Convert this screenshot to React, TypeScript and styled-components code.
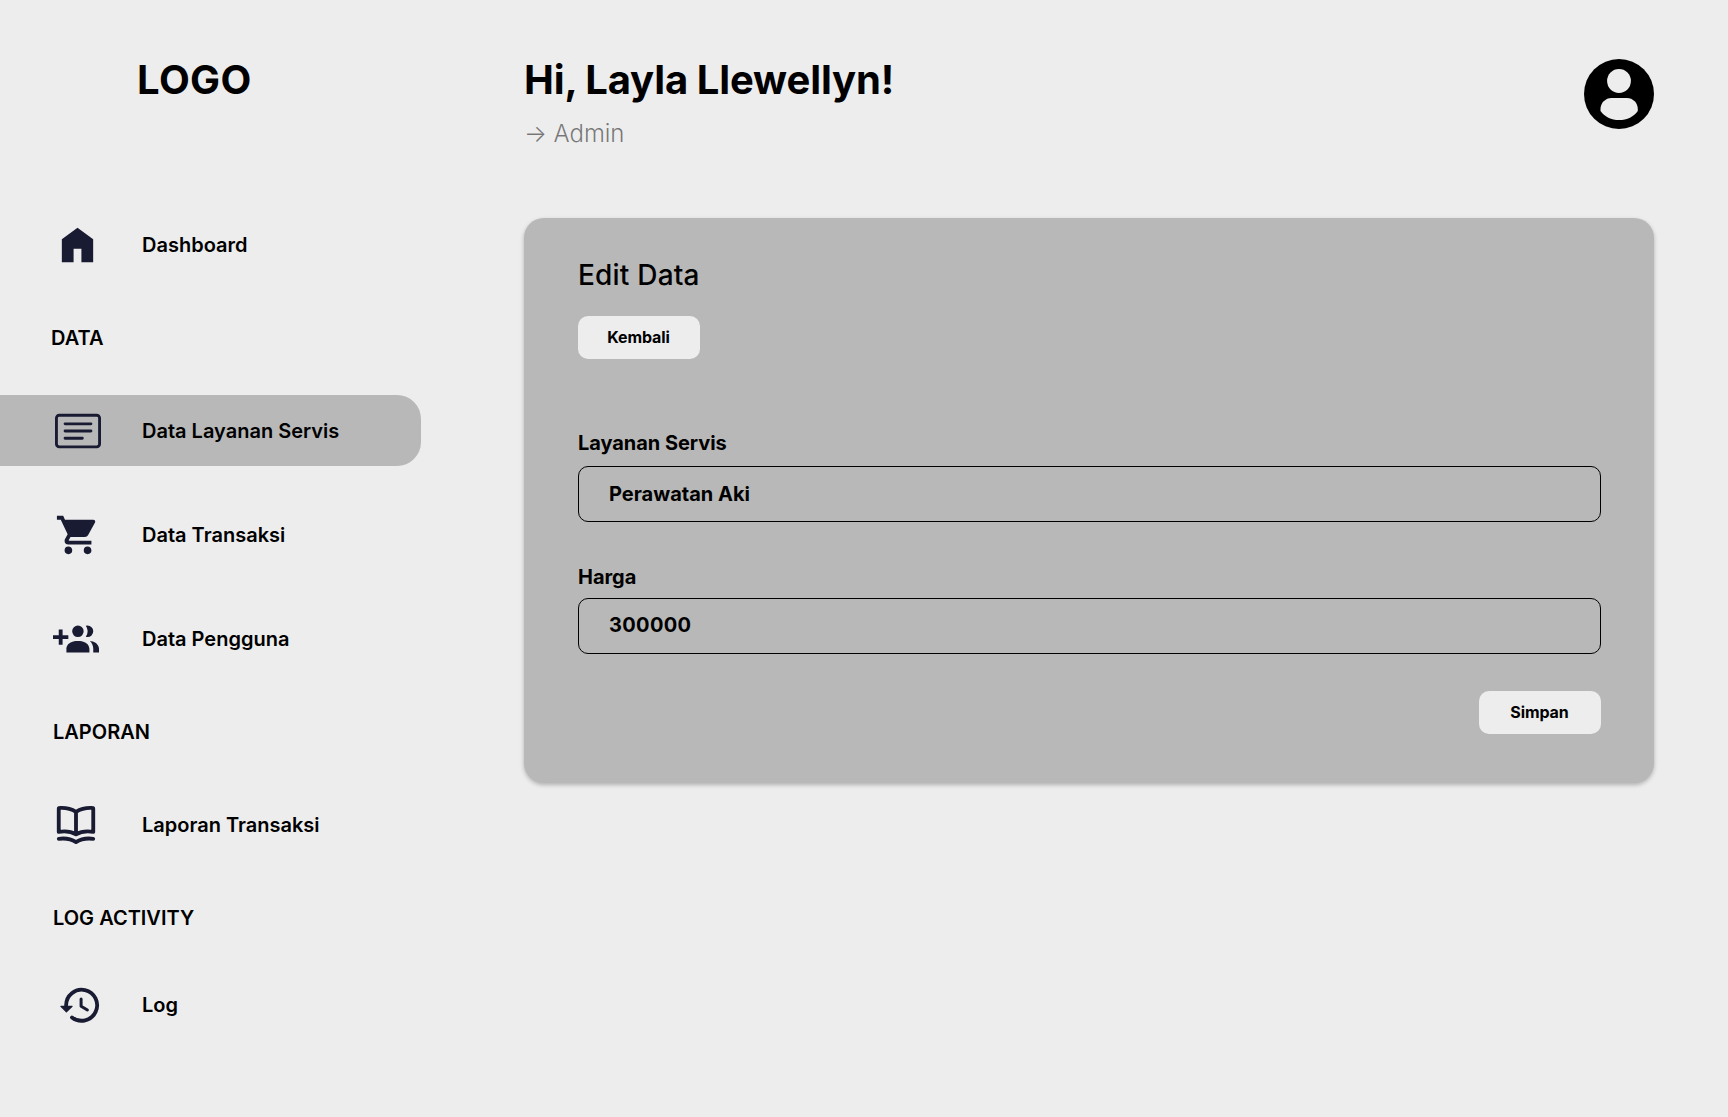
import React from "react";
import styled, { createGlobalStyle } from "styled-components";
import { BsCardText } from "react-icons/bs";

const GlobalStyle = createGlobalStyle`
  *, *::before, *::after { box-sizing: border-box; }
  body {
    margin: 0;
    background: #ededed;
    color: #000;
    font-family: Inter, "Liberation Sans", sans-serif;
  }
  h1, h2, p { margin: 0; }
`;

const Page = styled.div`
  display: flex;
  width: 1728px;
  height: 1117px;
  overflow: hidden;
  background: #ededed;
`;

const Sidebar = styled.aside`
  display: flex;
  flex-direction: column;
  flex: none;
  width: 524px;
`;

const Logo = styled.div`
  height: 48px;
  margin: 56px 0 105px 137px;
  font-size: 40px;
  line-height: 48px;
  font-weight: 700;
  letter-spacing: 0.4px;
`;

const Nav = styled.nav`
  display: flex;
  flex-direction: column;
  width: 421px;
`;

const Section = styled.div<{ $indent: number; $below: number }>`
  margin: 46px 0 ${(p) => p.$below}px;
  padding-left: ${(p) => p.$indent}px;
  font-size: 20px;
  line-height: 24px;
  font-weight: 600;
`;

const Group = styled.div`
  display: flex;
  flex-direction: column;
  gap: 33px;
`;

const Item = styled.a<{ $active?: boolean }>`
  display: flex;
  align-items: center;
  height: 71px;
  border-radius: 0 24px 24px 0;
  background: ${(p) => (p.$active ? "#b8b8b8" : "transparent")};
  color: #000;
  font-size: 20px;
  line-height: 24px;
  font-weight: 600;
`;

const IconSlot = styled.span<{ $indent: number }>`
  display: flex;
  flex: none;
  width: 142px;
  margin-top: 1px;
  padding-left: ${(p) => p.$indent}px;
  color: #191b33;
`;

const Main = styled.main`
  display: flex;
  flex-direction: column;
  width: 1130px;
`;

const Header = styled.header`
  display: flex;
  justify-content: space-between;
  height: 218px;
  padding-top: 56px;
`;

const Greeting = styled.h1`
  font-size: 40px;
  line-height: 48px;
  font-weight: 700;
  letter-spacing: -0.11px;
  word-spacing: -0.7px;
`;

const Role = styled.p`
  margin-top: 15px;
  font-size: 24px;
  line-height: 29px;
  font-weight: 300;
  letter-spacing: -0.06px;
  color: rgba(0, 0, 0, 0.5);
`;

const Avatar = styled.svg`
  width: 70px;
  height: 70px;
  margin-top: 3px;
`;

const Card = styled.section`
  display: flex;
  flex-direction: column;
  height: 565px;
  padding: 40px 53px 0 54px;
  border-radius: 20px;
  background: #b8b8b8;
  box-shadow: 0 2px 4px rgba(0, 0, 0, 0.25);
`;

const Title = styled.h2`
  font-size: 28px;
  line-height: 34px;
  font-weight: 500;
  letter-spacing: 0.2px;
`;

const Button = styled.button`
  width: 122px;
  height: 43px;
  padding: 0 1px 1px 0;
  border: 0;
  border-radius: 10px;
  background: #ededed;
  color: #000;
  font-family: inherit;
  font-size: 16px;
  font-weight: 700;
  letter-spacing: -0.08px;
`;

const BackRow = styled.div`
  display: flex;
  margin: 24px 0 72px;
`;

const SaveRow = styled.div`
  display: flex;
  justify-content: flex-end;
  margin-top: 37px;
`;

const Fields = styled.form`
  display: flex;
  flex-direction: column;
`;

const Label = styled.label`
  font-size: 20px;
  line-height: 24px;
  font-weight: 700;
  letter-spacing: -0.05px;
`;

const Input = styled.input<{ $numeric?: boolean }>`
  width: 100%;
  height: 56px;
  padding: 0 30px ${(p) => (p.$numeric ? 2 : 0)}px;
  border: 1px solid #000;
  border-radius: 10px;
  background: transparent;
  color: #000;
  font-family: inherit;
  font-size: 20px;
  font-weight: 700;
  letter-spacing: ${(p) => (p.$numeric ? "0.35px" : "0")};
  outline: none;
`;

const Field = styled.div<{ $gap: number }>`
  display: flex;
  flex-direction: column;
  gap: ${(p) => p.$gap}px;
  & + & { margin-top: 43px; }
`;

const HomeIcon = () => (
  <svg width="47" height="46" viewBox="0 0 24 24" preserveAspectRatio="none" fill="currentColor">
    <path d="M4 21V9l8-6l8 6v12h-6v-7h-4v7z" />
  </svg>
);

const CartIcon = () => (
  <svg width="46" height="46" viewBox="0 0 24 24" fill="currentColor">
    <path d="M17 18A2 2 0 0 0 15 20A2 2 0 0 0 17 22A2 2 0 0 0 19 20C19 18.89 18.1 18 17 18M1 2V4H3L6.6 11.59L5.24 14.04C5.09 14.32 5 14.65 5 15A2 2 0 0 0 7 17H19V15H7.42A.25.25 0 0 1 7.17 14.75C7.17 14.7 7.18 14.66 7.2 14.63L8.1 13H15.55C16.3 13 16.96 12.58 17.3 11.97L20.88 5.5C20.95 5.34 21 5.17 21 5A1 1 0 0 0 20 4H5.21L4.27 2M7 18A2 2 0 0 0 5 20A2 2 0 0 0 7 22A2 2 0 0 0 9 20C9 18.89 8.1 18 7 18Z" />
  </svg>
);

const PeopleIcon = () => (
  <svg width="46" height="46" viewBox="0 0 24 24" fill="currentColor">
    <path d="M19 17V19H7V17S7 13 13 13 19 17 19 17M16 8A3 3 0 1 0 13 11A3 3 0 0 0 16 8M19.2 13.06A5.6 5.6 0 0 1 21 17V19H24V17S24 13.55 19.2 13.06M18 5A2.91 2.91 0 0 0 17.11 5.14A5 5 0 0 1 17.11 10.86A2.91 2.91 0 0 0 18 11A3 3 0 0 0 18 5M8 10H5V7H3V10H0V12H3V15H5V12H8Z" />
  </svg>
);

const BookIcon = () => (
  <svg width="46" height="46" viewBox="0 0 24 24" fill="none" stroke="currentColor" strokeWidth="2" strokeLinecap="round" strokeLinejoin="round">
    <path d="M12 5.1C9.4 3.5 6.8 2.9 3.5 3.1Q3 3.1 3 3.6V15.6C6.6 15 9.3 15.3 12 16.9C14.7 15.3 17.4 15 21 15.6V3.6Q21 3.1 20.5 3.1C17.2 2.9 14.6 3.5 12 5.1V16.5" />
    <path d="M3 19.2C6.5 18.7 9 19 12 20.9C15 19 17.5 18.7 21 19.2" />
  </svg>
);

const HistoryIcon = () => (
  <svg width="46" height="46" viewBox="0 0 46 46" fill="none" stroke="currentColor" strokeLinecap="round" strokeLinejoin="round">
    <path strokeWidth="3.8" d="M10.1 25V23.3A15.5 15.5 0 1 1 16 35.4" />
    <path strokeWidth="3" d="M25.1 17V24.2L31.4 28" />
    <path strokeWidth="1.2" fill="currentColor" d="M4.9 24.3H16.1L10.4 29.8Z" />
  </svg>
);

export default function App() {
  return (
    <>
      <GlobalStyle />
      <Page>
        <Sidebar>
          <Logo>LOGO</Logo>
          <Nav>
            <Item>
              <IconSlot $indent={54}><HomeIcon /></IconSlot>
              Dashboard
            </Item>
            <Section $indent={51} $below={45}>DATA</Section>
            <Group>
              <Item $active>
                <IconSlot $indent={55}><BsCardText size={46} /></IconSlot>
                Data Layanan Servis
              </Item>
              <Item>
                <IconSlot $indent={55}><CartIcon /></IconSlot>
                Data Transaksi
              </Item>
              <Item>
                <IconSlot $indent={53}><PeopleIcon /></IconSlot>
                Data Pengguna
              </Item>
            </Group>
            <Section $indent={53} $below={45}>LAPORAN</Section>
            <Item>
              <IconSlot $indent={53}><BookIcon /></IconSlot>
              Laporan Transaksi
            </Item>
            <Section $indent={53} $below={39}>LOG ACTIVITY</Section>
            <Item>
              <IconSlot $indent={56}><HistoryIcon /></IconSlot>
              Log
            </Item>
          </Nav>
        </Sidebar>
        <Main>
          <Header>
            <div>
              <Greeting>Hi, Layla Llewellyn!</Greeting>
              <Role>→ Admin</Role>
            </div>
            <Avatar viewBox="0 0 70 70">
              <circle cx="35" cy="35" r="35" />
              <circle cx="35" cy="22" r="11.9" fill="#ededed" />
              <path fill="#ededed" d="M27.6 38.9H42.8C49 38.9 53.8 43.8 53.8 50V52C50 57.6 43 61.1 35.1 61.1C27.3 61.1 20.3 57.6 16.5 52V50C16.5 43.8 21.4 38.9 27.6 38.9Z" />
            </Avatar>
          </Header>
          <Card>
            <Title>Edit Data</Title>
            <BackRow>
              <Button>Kembali</Button>
            </BackRow>
            <Fields>
              <Field $gap={11}>
                <Label htmlFor="layanan">Layanan Servis</Label>
                <Input id="layanan" defaultValue="Perawatan Aki" />
              </Field>
              <Field $gap={9}>
                <Label htmlFor="harga">Harga</Label>
                <Input id="harga" $numeric defaultValue="300000" />
              </Field>
              <SaveRow>
                <Button type="button">Simpan</Button>
              </SaveRow>
            </Fields>
          </Card>
        </Main>
      </Page>
    </>
  );
}
